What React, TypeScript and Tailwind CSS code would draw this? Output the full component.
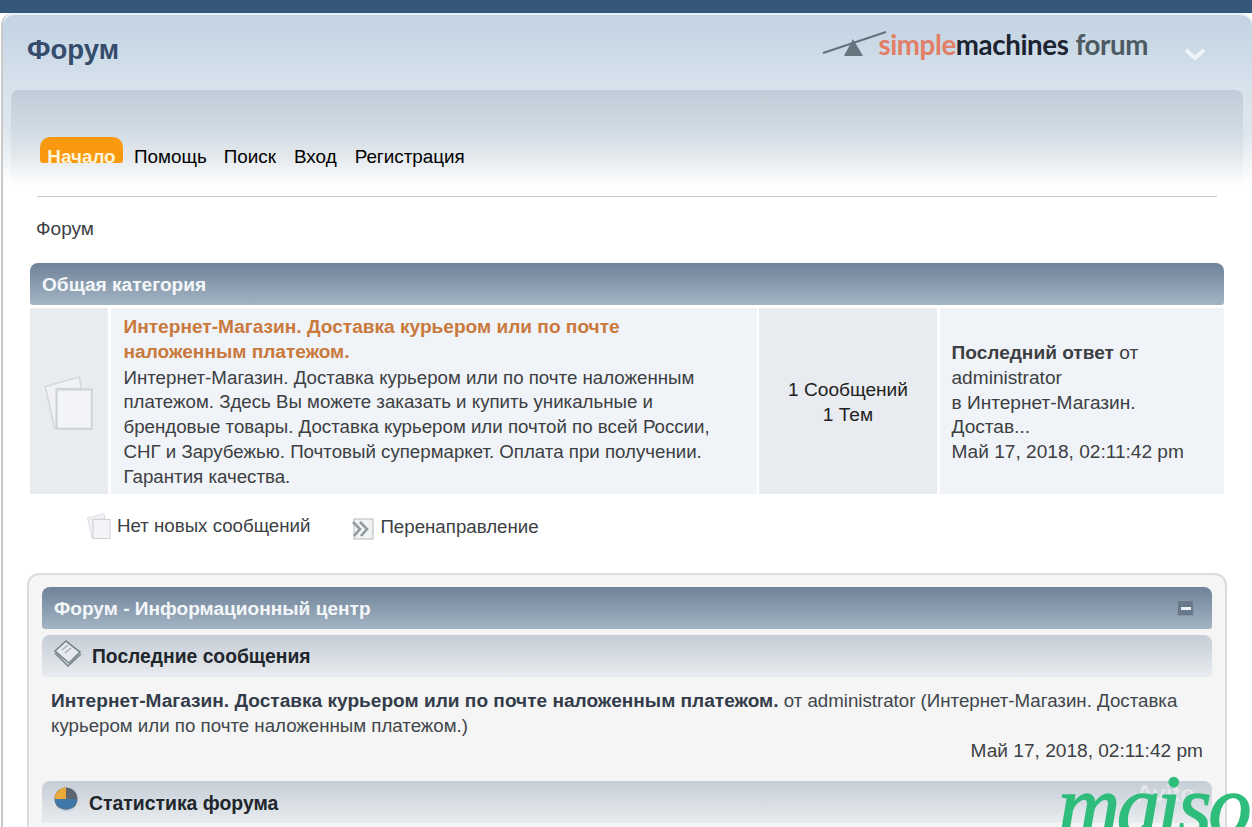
function PagesIcon({ size = 52 }: { size?: number }) {
  return (
    <svg width={size} height={size} viewBox="0 0 52 60">
      <path d="M3 12 L36 3 L38 14 L14 14 L14 52 L12 52 Z" fill="#f1f2f5" stroke="#d3d6db" strokeWidth="1.5" />
      <rect x="14" y="15" width="34" height="38" fill="#f3f4f7" stroke="#cfd2d7" strokeWidth="2" />
    </svg>
  );
}

function RedirectIcon() {
  return (
    <svg width="24" height="26" viewBox="0 0 24 26">
      <rect x="3" y="3" width="19" height="20" fill="#f1f2f4" stroke="#b4babe" strokeWidth="1" />
      <path d="M2 6 L9 13 L3 20 M9 6 L16 13 L10 20" fill="none" stroke="#8f9ba0" strokeWidth="2.6" />
    </svg>
  );
}

function PostsIcon() {
  return (
    <svg width="30" height="30" viewBox="0 0 30 30">
      <path d="M2 12 L13 2 L27 13 L16 24 Z" fill="#e6e9ee" stroke="#77828a" strokeWidth="1.6" />
      <path d="M2 14 L15 27 L28 15" fill="none" stroke="#77828a" strokeWidth="1.6" />
      <path d="M9 11 L15 6 M12 14 L18 9" stroke="#a4abb2" strokeWidth="1.2" />
    </svg>
  );
}

function StatsIcon() {
  return (
    <svg width="24" height="26" viewBox="0 0 24 26">
      <circle cx="12" cy="12" r="11.5" fill="#5b6670" />
      <path d="M12 12 L12 0.5 A11.5 11.5 0 0 0 0.6 12 Z" fill="#eaa93a" />
      <path d="M0.6 12 L23.4 12 A11.5 11.5 0 0 1 0.6 12 Z" fill="#3f77a8" />
      <path d="M4 21 Q12 26 20 21" fill="none" stroke="#bcd3e6" strokeWidth="1.5" />
    </svg>
  );
}

function Logo() {
  return (
    <div className="flex items-center h-[32px]">
      <svg width="65" height="30" viewBox="0 0 65 30" className="mt-[-4px]">
        <path d="M1 24 L64 3" stroke="#66727c" strokeWidth="2.2" />
        <path d="M22 27 L31 10 L41 27 Z" fill="#66767f" />
      </svg>
      <span className="ml-[-9px] mt-[-3px] text-[27.7px] tracking-[-0.4px] font-bold font-['Lato',sans-serif] leading-none whitespace-nowrap">
        <span className="text-[#e27e66]">simple</span>
        <span className="text-[#1c2431]">machines</span>
        <span className="text-[#4d5a62] ml-[7px]">forum</span>
      </span>
    </div>
  );
}

export default function App() {
  return (
    <div className="relative h-[827px] w-[1252px] overflow-hidden bg-white font-['Liberation_Sans',sans-serif] text-[19.1px] text-[#3c4043]">
      <div className="h-[13px] bg-[#35587a]" />

      <div className="h-[814px] ml-px border-l-2 border-[#c9c9c9] rounded-tl-xl">
        <div className="h-[173px] rounded-t-xl border-t-2 border-[#e6f1f9] bg-[linear-gradient(to_bottom,#c3d3e3_0%,#d6e2ec_42%,#dfe7ee_70%,#ffffff_100%)]">
          <div className="flex justify-between h-[75px]">
            <h1 className="ml-[24px] mt-[17px] text-[27.5px] leading-[36px] font-bold text-[#354c6c]">Форум</h1>
            <div className="flex">
              <div className="mt-[15px]"><Logo /></div>
              <svg width="22" height="14" viewBox="0 0 22 14" className="ml-[36px] mr-[46px] mt-[32px]">
                <path d="M2 3 L11 11 L20 3" fill="none" stroke="#eef4f9" strokeWidth="4" />
              </svg>
            </div>
          </div>

          <nav className="h-[96px] ml-[8px] mr-[9px] rounded-t-lg pl-[29px] pt-[47px] flex items-start text-black text-[18.85px] leading-[40px] bg-[linear-gradient(to_bottom,#c1ccd8_0%,#cfdae4_40%,#e6eaee_72%,#ffffff_100%)]">
            <span className="h-[26px] w-[83px] rounded-t-[10px] rounded-b-[3px] bg-[#f8990f] text-center font-bold text-[#fff3d9]">Начало</span>
            <span className="ml-[11px]">Помощь</span>
            <span className="ml-[17px]">Поиск</span>
            <span className="ml-[18px]">Вход</span>
            <span className="ml-[18px]">Регистрация</span>
          </nav>
        </div>

        <div className="ml-[34px] mr-[35px] mt-[10px] h-px bg-[#c8c8c8]" />

        <div className="ml-[33px] mt-[19px] leading-[25px]">Форум</div>

        <div className="ml-[27px] mr-[28px] mt-[22px]">
          <div className="h-[42px] rounded-t-lg rounded-b-[3px] pl-[12px] leading-[44px] font-bold text-[#f4f7f9] bg-[linear-gradient(to_bottom,#6f8298,#a3b5c4)]">
            Общая категория
          </div>

          <div className="mt-[3px] flex h-[186px] gap-[2.5px] leading-[24.8px]">
            <div className="w-[78px] bg-[#e8ebef] flex items-center justify-center pt-[8px]">
              <PagesIcon size={62} />
            </div>
            <div className="w-[646px] bg-[#f0f3f7] pl-[13px] pr-[35px] pt-[7px]">
              <div className="font-bold text-[#c9793c]">Интернет-Магазин. Доставка курьером или по почте наложенным платежом.</div>
              <div className="mt-px text-[18.7px]">Интернет-Магазин. Доставка курьером или по почте наложенным платежом. Здесь Вы можете заказать и купить уникальные и брендовые товары. Доставка курьером или почтой по всей России, СНГ и Зарубежью. Почтовый супермаркет. Оплата при получении. Гарантия качества.</div>
            </div>
            <div className="w-[178px] bg-[#e8ebef] flex items-center justify-center text-center text-[#222]">
              <div className="mt-[3px]">1 Сообщений<br />1 Тем</div>
            </div>
            <div className="flex-1 bg-[#f0f3f7] pl-[12px] pt-[33px]">
              <div><b>Последний ответ</b> от</div>
              <div>administrator</div>
              <div>в Интернет-Магазин.</div>
              <div>Достав...</div>
              <div>Май 17, 2018, 02:11:42 pm</div>
            </div>
          </div>

          <div className="flex items-center ml-[54px] mt-[19px] h-[28px] text-[18.7px]">
            <PagesIcon size={30} />
            <span className="ml-[3px] mt-[-1px]">Нет новых сообщений</span>
            <span className="ml-[41px] mt-[3px]"><RedirectIcon /></span>
            <span className="ml-[5px] mt-px">Перенаправление</span>
          </div>
        </div>

        <div className="ml-[24px] mr-[25px] mt-[32px] h-[300px] rounded-t-xl border-2 border-[#dcdcdc] bg-[#f5f5f5] px-[13px] pt-[12px]">
          <div className="flex items-center justify-between h-[42px] rounded-t-lg rounded-b-[3px] pl-[12px] pr-[18px] font-bold text-[#f4f7f9] bg-[linear-gradient(to_bottom,#6f8298,#a3b5c4)]">
            <span className="mt-[3px]">Форум - Информационный центр</span>
            <span className="w-[17px] h-[16px] rounded-[2px] bg-[#66788a] border border-[#8796a6] flex items-center justify-center">
              <span className="w-[10px] h-[3px] bg-[#eef1f4]" />
            </span>
          </div>

          <div className="mt-[6px] flex items-center h-[42px] rounded-t-lg rounded-b-[3px] pl-[11px] font-bold text-[19.3px] text-[#20262b] bg-[linear-gradient(to_bottom,#c5cdd6,#e9ecef)]">
            <span className="mt-[-5px]"><PostsIcon /></span>
            <span className="ml-[9px] mt-[3px]">Последние сообщения</span>
          </div>

          <div className="mt-[11px] pl-[9px] pr-[9px] leading-[25px]">
            <div className="text-[#40464c] text-[18.7px]">
              <b className="text-[#333c4a] text-[19.1px]">Интернет-Магазин. Доставка курьером или по почте наложенным платежом.</b> от administrator (Интернет-Магазин. Доставка курьером или по почте наложенным платежом.)
            </div>
            <div className="text-right">Май 17, 2018, 02:11:42 pm</div>
          </div>

          <div className="mt-[18px] flex items-center h-[42px] rounded-t-lg pl-[12px] font-bold text-[19.4px] text-[#20262b] bg-[linear-gradient(to_bottom,#c5cdd6,#e9ecef)]">
            <span className="mt-[-5px]"><StatsIcon /></span>
            <span className="ml-[11px] mt-[4px]">Статистика форума</span>
          </div>
        </div>
      </div>

      {/* watermarks on top of the photo */}
      <span className="absolute left-[1136px] top-[776px] text-[24px] font-bold text-[#e4e6ea]">Avito</span>
      <span className="absolute left-[1058px] top-[764px] text-[86px] leading-[84px] italic tracking-[-3px] text-[#2fbd7c] [-webkit-text-stroke:1.5px_#2fbd7c] font-['Liberation_Serif',serif]">maiso</span>
    </div>
  );
}
